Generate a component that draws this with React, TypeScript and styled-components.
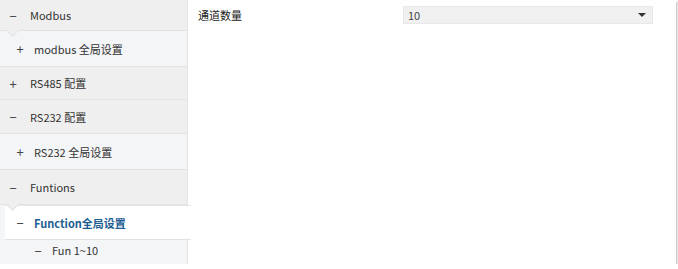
import React from 'react';
import styled, { createGlobalStyle } from 'styled-components';

const GlobalStyle = createGlobalStyle`
  body {
    margin: 0;
    background: #ffffff;
    font-family: "Noto Sans CJK SC", "Noto Sans", sans-serif;
  }
`;

const Frame = styled.div`
  display: flex;
  width: 676px;
  height: 264px;
  background: #ffffff;
  box-shadow: 1px 2px 2px rgba(0, 0, 0, 0.3);
  overflow: hidden;
`;

const Sidebar = styled.div`
  display: flex;
  flex-direction: column;
  width: 187px;
  flex-shrink: 0;
  background: #f4f5f7;
  border-right: 1px solid #e4e4e4;
`;

type Level = 0 | 1 | 2;

const indent: Record<Level, number> = { 0: 5, 1: 12, 2: 30 };
const gap: Record<Level, number> = { 0: 9, 1: 6, 2: 6 };

const Row = styled.div<{ $level: Level; $height: number; $notch?: boolean; $selected?: boolean }>`
  position: relative;
  display: flex;
  align-items: center;
  flex-shrink: 0;
  gap: ${p => gap[p.$level]}px;
  height: ${p => p.$height}px;
  padding-left: ${p => indent[p.$level] - (p.$selected ? 5 : 0)}px;
  margin-left: ${p => (p.$selected ? 5 : 0)}px;
  margin-right: ${p => (p.$selected ? -4 : 0)}px;
  background: ${p => (p.$selected ? '#ffffff' : p.$level === 0 ? '#efefef' : '#f4f5f7')};
  border-bottom: ${p => (p.$level === 2 ? 'none' : '1px solid #e2e2e2')};
  border-top: ${p => (p.$selected ? '1px solid #e6e6e6' : 'none')};
  font-size: 11px;
  color: ${p => (p.$selected ? '#1d5d92' : '#333333')};
  font-weight: ${p => (p.$selected ? 700 : 400)};
  box-sizing: border-box;

  &::after {
    content: '';
    display: ${p => (p.$notch ? 'block' : 'none')};
    position: absolute;
    left: 8px;
    bottom: -5px;
    width: 8px;
    height: 8px;
    background: inherit;
    border-right: 1px solid #e2e2e2;
    border-bottom: 1px solid #e2e2e2;
    transform: rotate(45deg);
    z-index: 1;
  }
`;

const Sign = styled.span`
  display: inline-block;
  width: 16px;
  text-align: center;
  font-size: 13px;
  font-weight: 400;
  color: #444444;
`;

const Main = styled.div`
  flex: 1;
  padding: 6px 0 0 10px;
`;

const Field = styled.div`
  display: flex;
  align-items: center;
  height: 18px;
`;

const Label = styled.div`
  width: 205px;
  font-size: 11px;
  color: #222222;
`;

const Select = styled.div`
  display: flex;
  align-items: center;
  justify-content: space-between;
  width: 250px;
  height: 18px;
  padding: 0 6px 0 4px;
  box-sizing: border-box;
  background: #f0f0f0;
  border: 1px solid #e8e8e8;
  font-size: 11px;
  color: #444444;
`;

const Caret = styled.span`
  width: 0;
  height: 0;
  border-left: 4px solid transparent;
  border-right: 4px solid transparent;
  border-top: 4px solid #333333;
`;

const items: { label: string; sign: string; level: Level; height: number; notch?: boolean; selected?: boolean }[] = [
  { label: 'Modbus', sign: '−', level: 0, height: 31, notch: true },
  { label: 'modbus 全局设置', sign: '+', level: 1, height: 36 },
  { label: 'RS485 配置', sign: '+', level: 0, height: 33 },
  { label: 'RS232 配置', sign: '−', level: 0, height: 34 },
  { label: 'RS232 全局设置', sign: '+', level: 1, height: 36 },
  { label: 'Funtions', sign: '−', level: 0, height: 35, notch: true },
  { label: 'Function全局设置', sign: '−', level: 1, height: 35, selected: true },
  { label: 'Fun 1~10', sign: '−', level: 2, height: 20 },
];

const App = () => {
  return (
    <>
      <GlobalStyle />
      <Frame>
        <Sidebar>
          {items.map(item => (
            <Row
              key={item.label}
              $level={item.level}
              $height={item.height}
              $notch={item.notch}
              $selected={item.selected}
            >
              <Sign>{item.sign}</Sign>
              {item.label}
            </Row>
          ))}
        </Sidebar>
        <Main>
          <Field>
            <Label>通道数量</Label>
            <Select>
              10
              <Caret />
            </Select>
          </Field>
        </Main>
      </Frame>
    </>
  );
};

export default App;
